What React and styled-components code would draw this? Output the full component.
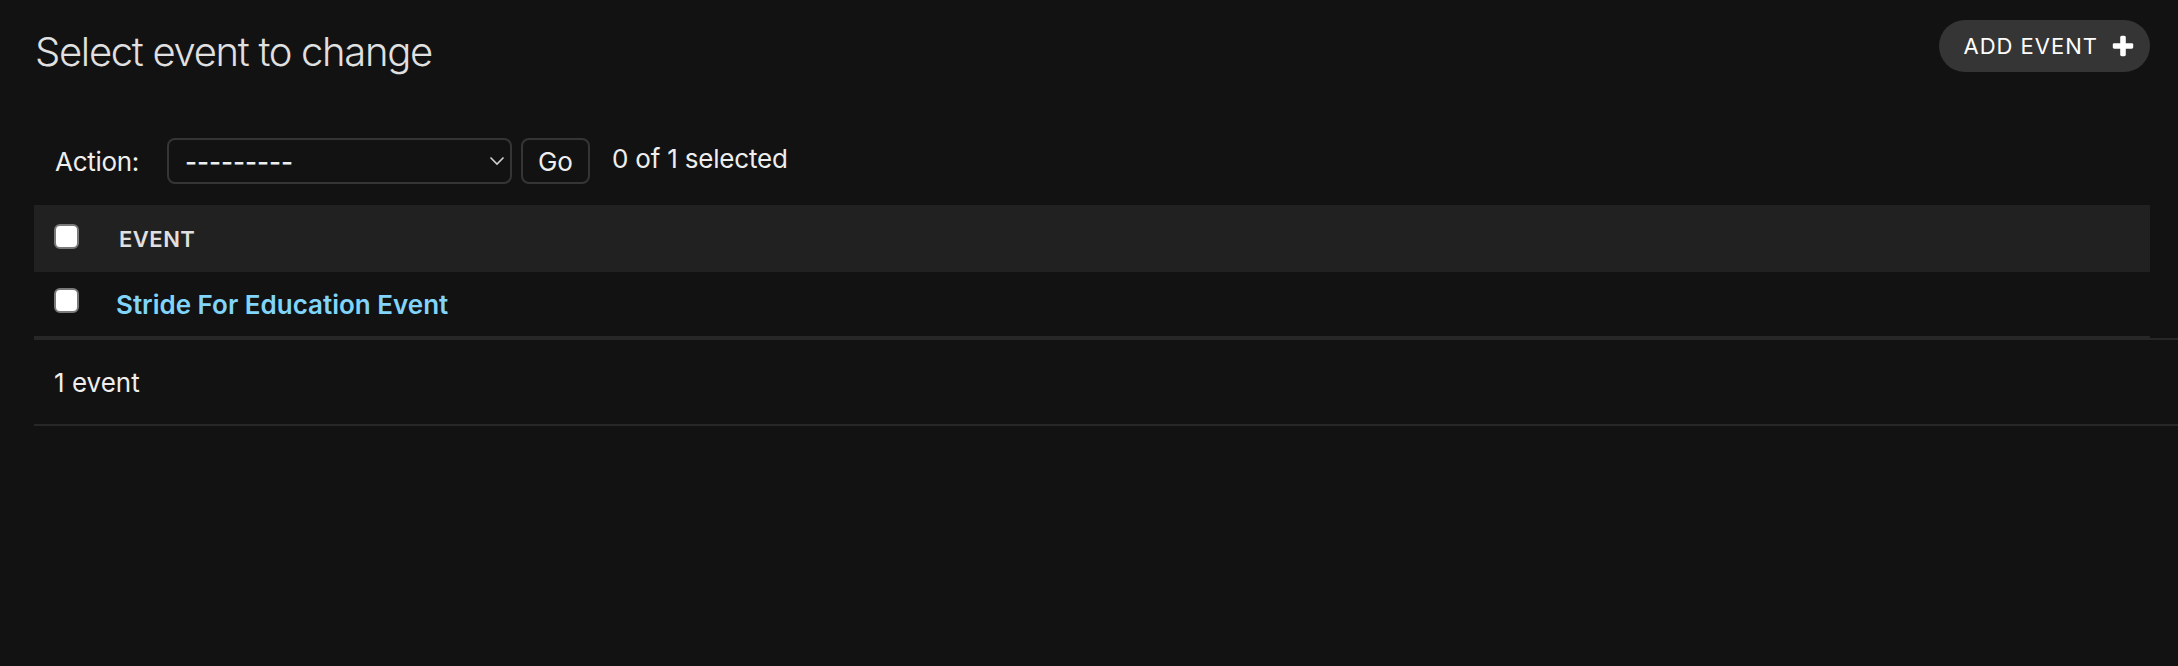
import React from "react";
import styled, { createGlobalStyle } from "styled-components";

const colors = {
  bg: "#121212",
  fg: "#eeeeee",
  quiet: "#e0e0e0",
  link: "#81d4fa",
  hairline: "#272727",
  border: "#353535",
  darkened: "#212121",
  tools: "#353535",
};

const GlobalStyle = createGlobalStyle`
  html, body {
    margin: 0;
    padding: 0;
    background: ${colors.bg};
    color: ${colors.fg};
    font-family: Inter, "Noto Sans", "Liberation Sans", sans-serif;
  }
  * { box-sizing: border-box; }
`;

const Page = styled.div`
  min-height: 666px;
  padding: 20px 28px 0 34px;
  overflow: hidden;
`;

const TopBar = styled.div`
  display: flex;
  justify-content: space-between;
  align-items: flex-start;
`;

const Title = styled.h1`
  margin: 8px 0 0 1px;
  font-size: 40px;
  line-height: 48px;
  font-weight: 300;
  letter-spacing: -1.3px;
  color: ${colors.quiet};
`;

const AddLink = styled.a`
  display: flex;
  align-items: center;
  height: 52px;
  padding: 0 14px 0 24px;
  border-radius: 26px;
  background: ${colors.tools};
  color: #ffffff;
  font-size: 22px;
  letter-spacing: 1px;
  text-transform: uppercase;
  text-decoration: none;
  cursor: pointer;

  svg {
    margin-left: 12px;
  }
`;

const Actions = styled.div`
  display: flex;
  align-items: center;
  margin-top: 62px;
  padding-left: 21px;
  height: 46px;
  font-size: 26px;
`;

const Label = styled.label`
  color: ${colors.fg};
  letter-spacing: -0.3px;
  margin-right: 28px;
`;

const SelectWrap = styled.div`
  position: relative;
  width: 345px;
  height: 46px;

  svg {
    position: absolute;
    right: 7px;
    top: 18px;
    pointer-events: none;
  }
`;

const Select = styled.select`
  appearance: none;
  width: 100%;
  height: 100%;
  padding: 0 30px 0 16px;
  background: ${colors.bg};
  color: ${colors.fg};
  border: 2px solid ${colors.border};
  border-radius: 8px;
  font-family: inherit;
  font-size: 26px;
  font-weight: 500;
  outline: none;
`;

const GoButton = styled.button`
  margin-left: 9px;
  width: 69px;
  height: 46px;
  background: ${colors.bg};
  color: ${colors.fg};
  border: 2px solid ${colors.border};
  border-radius: 8px;
  font-family: inherit;
  font-size: 26px;
  cursor: pointer;
`;

const Counter = styled.span`
  margin-left: 22px;
  margin-top: -6px;
  letter-spacing: -0.2px;
  color: ${colors.fg};
`;

const Table = styled.div`
  margin-top: 21px;
`;

const Row = styled.div`
  display: flex;
  align-items: center;
  height: ${(p) => (p.head ? "67px" : "66px")};
  background: ${(p) => (p.head ? colors.darkened : "transparent")};
  border-bottom: ${(p) => (p.head ? "0" : `2px solid ${colors.hairline}`)};
`;

const CheckCell = styled.div`
  width: 82px;
  padding-left: 20px;
  display: flex;
  align-items: center;
  margin-top: ${(p) => (p.head ? "-5px" : "-7px")};
`;

const Check = styled.input.attrs({ type: "checkbox" })`
  appearance: none;
  margin: 0;
  width: 25px;
  height: 25px;
  background: #ffffff;
  border: 2px solid #7a7a7a;
  border-radius: 6px;
`;

const HeadCell = styled.div`
  margin-left: 3px;
  font-size: 22px;
  font-weight: 600;
  letter-spacing: 0.5px;
  text-transform: uppercase;
  color: ${colors.quiet};
`;

const LinkCell = styled.a`
  font-size: 26px;
  font-weight: 600;
  color: ${colors.link};
  text-decoration: none;
  cursor: pointer;
`;

const Paginator = styled.div`
  display: flex;
  align-items: center;
  height: 88px;
  margin-right: -28px;
  padding-left: 20px;
  border-top: 2px solid ${colors.hairline};
  border-bottom: 2px solid ${colors.hairline};
  font-size: 26px;
  color: ${colors.fg};
`;

const PlusIcon = () => (
  <svg width="26" height="26" viewBox="0 0 1792 1792" aria-hidden="true">
    <path
      fill="#ffffff"
      d="M1600 796v192q0 40-28 68t-68 28h-416v416q0 40-28 68t-68 28h-192q-40 0-68-28t-28-68v-416h-416q-40 0-68-28t-28-68v-192q0-40 28-68t68-28h416v-416q0-40 28-68t68-28h192q40 0 68 28t28 68v416h416q40 0 68 28t28 68z"
    />
  </svg>
);

const Chevron = () => (
  <svg width="16" height="10" viewBox="0 0 16 10" aria-hidden="true">
    <path d="M1.5 1.5 L8 8 L14.5 1.5" fill="none" stroke="#d0d0d0" strokeWidth="1.6" />
  </svg>
);

const events = ["Stride For Education Event"];

export default function App() {
  return (
    <>
      <GlobalStyle />
      <Page>
        <TopBar>
          <Title>Select event to change</Title>
          <AddLink>
            Add event
            <PlusIcon />
          </AddLink>
        </TopBar>

        <Actions>
          <Label>Action:</Label>
          <SelectWrap>
            <Select defaultValue="">
              <option value="">---------</option>
              <option value="delete">Delete selected events</option>
            </Select>
            <Chevron />
          </SelectWrap>
          <GoButton>Go</GoButton>
          <Counter>0 of {events.length} selected</Counter>
        </Actions>

        <Table>
          <Row head>
            <CheckCell head>
              <Check />
            </CheckCell>
            <HeadCell>Event</HeadCell>
          </Row>
          {events.map((name) => (
            <Row key={name}>
              <CheckCell>
                <Check />
              </CheckCell>
              <LinkCell>{name}</LinkCell>
            </Row>
          ))}
        </Table>

        <Paginator>
          {events.length} event{events.length === 1 ? "" : "s"}
        </Paginator>
      </Page>
    </>
  );
}
